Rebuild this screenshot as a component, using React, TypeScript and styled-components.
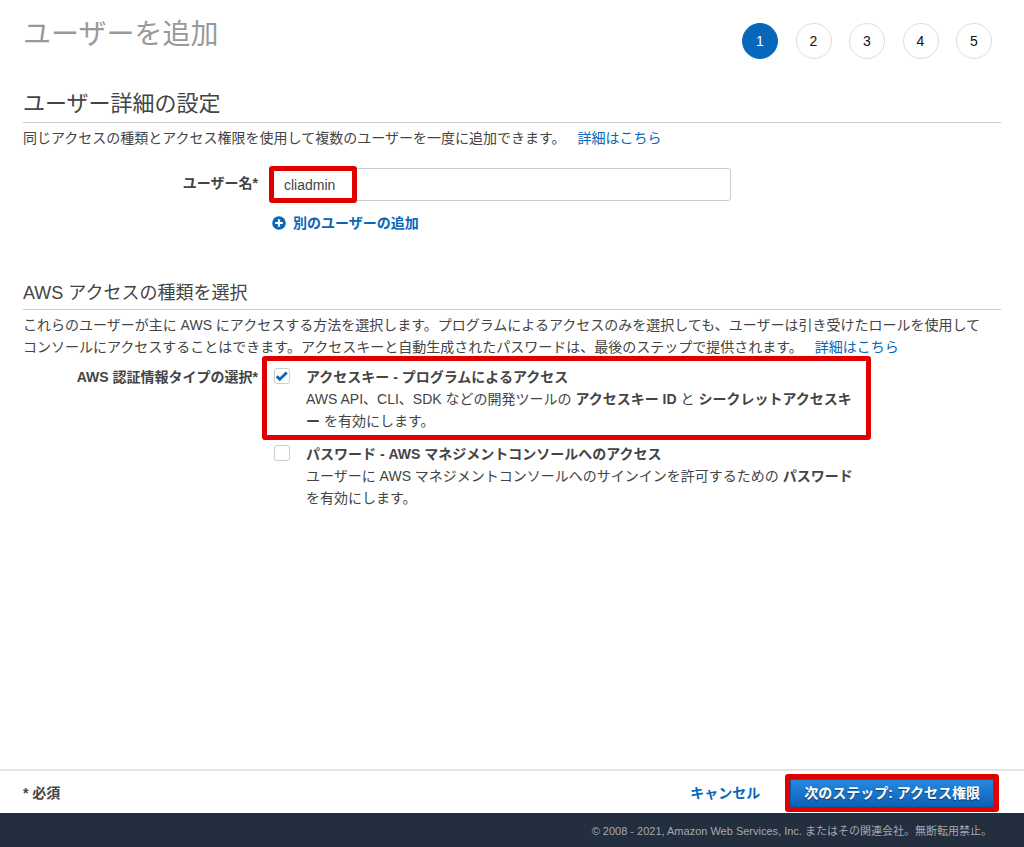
import React, { useState } from "react";
import styled, { createGlobalStyle, css } from "styled-components";

const GlobalStyle = createGlobalStyle`
  *, *::before, *::after { box-sizing: border-box; }
  body {
    margin: 0;
    background: #fff;
    color: #444;
    font-family: "Liberation Sans", "Noto Sans CJK JP", sans-serif;
    font-size: 14px;
    line-height: 22px;
  }
  h1, h2, p { margin: 0; }
`;

const Page = styled.div`
  display: flex;
  flex-direction: column;
  min-height: 100vh;
`;

const Main = styled.main`
  flex: 1;
  padding: 17px 23px 0;
`;

const Header = styled.header`
  display: flex;
  justify-content: space-between;
  align-items: flex-start;
  padding-right: 9px;
`;

const Title = styled.h1`
  color: #999;
  font-size: 28px;
  font-weight: 400;
  line-height: 36px;
`;

const Steps = styled.ol`
  display: flex;
  justify-content: space-between;
  width: 250px;
  margin: 0;
  padding: 6px 0 0;
  list-style: none;
`;

const Step = styled.li<{ $current?: boolean }>`
  display: flex;
  align-items: center;
  justify-content: center;
  width: 36px;
  height: 36px;
  border: 1px solid ${(p) => (p.$current ? "#0767ba" : "#ddd")};
  border-radius: 50%;
  background: ${(p) => (p.$current ? "#0767ba" : "#fff")};
  color: ${(p) => (p.$current ? "#fff" : "#111")};
`;

const Section = styled.section<{ $gap: number }>`
  margin-top: ${(p) => p.$gap}px;
`;

const Heading = styled.h2<{ $large?: boolean }>`
  margin-bottom: 4px;
  padding-bottom: 4px;
  border-bottom: 1px solid #ccc;
  font-size: ${(p) => (p.$large ? 22 : 18)}px;
  font-weight: 400;
  line-height: ${(p) => (p.$large ? 28 : 24)}px;
`;

const Intro = styled.p`
  padding-right: 8px;
`;

const linkStyle = css`
  color: #0767ba;
  text-decoration: none;
`;

const MoreLink = styled.a`
  ${linkStyle}
  margin-left: 8px;
`;

const FormRow = styled.div`
  display: grid;
  grid-template-columns: 235px minmax(0, 1fr);
  column-gap: 14px;
`;

const NameRow = styled(FormRow)`
  margin-top: 19px;
`;

const CredentialRow = styled(FormRow)`
  margin-top: 8px;
`;

const fieldLabel = css`
  font-weight: 700;
  text-align: right;
`;

const NameLabel = styled.label`
  ${fieldLabel}
  padding-top: 4px;
`;

const GroupLabel = styled.div`
  ${fieldLabel}
`;

const Marked = styled.div`
  position: relative;
`;

const Mark = styled.span`
  position: absolute;
  border: 5px solid #e00000;
  border-radius: 3px;
  pointer-events: none;
`;

const NameMark = styled(Mark)`
  top: -2px;
  left: -3px;
  width: 88px;
  height: 37px;
`;

const OptionMark = styled(Mark)`
  inset: -10px -12px -8px -10px;
`;

const ButtonMark = styled(Mark)`
  inset: -5px;
`;

const NameInput = styled.input`
  display: block;
  width: 100%;
  height: 33px;
  padding: 0 11px;
  border: 1px solid #ccc;
  border-radius: 3px;
  color: #444;
  font: inherit;
`;

const NameField = styled(Marked)`
  max-width: 459px;
`;

const AddButton = styled.button`
  display: flex;
  align-items: center;
  gap: 7px;
  margin-top: 11px;
  padding: 0;
  border: 0;
  background: none;
  color: #0767ba;
  font: inherit;
  font-weight: 700;
`;

const Options = styled.div`
  display: grid;
  row-gap: 11px;
  max-width: 587px;
`;

const Option = styled(Marked)`
  display: grid;
  grid-template-columns: 16px minmax(0, 1fr);
  column-gap: 16px;
  padding-left: 2px;
`;

const CheckWrap = styled.span`
  position: relative;
  display: block;
  width: 16px;
  height: 16px;
  margin-top: 2px;
`;

const Check = styled.input`
  appearance: none;
  display: block;
  width: 16px;
  height: 16px;
  margin: 0;
  border: 1px solid #ccc;
  border-radius: 3px;
  background: #fff;
`;

const CheckGlyph = styled.svg`
  position: absolute;
  inset: 0;
  pointer-events: none;
`;

const OptionTitle = styled.label`
  display: block;
  font-weight: 700;
`;

const ActionBar = styled.div`
  display: flex;
  align-items: center;
  justify-content: space-between;
  min-height: 44px;
  padding: 2px 30px 0 23px;
  border-top: 2px solid #e4e4e4;
`;

const Actions = styled.div`
  display: flex;
  align-items: center;
  gap: 30px;
`;

const CancelLink = styled.a`
  ${linkStyle}
  font-weight: 700;
`;

const NextButton = styled.button`
  display: block;
  height: 28px;
  padding: 0 13px;
  border: 1px solid #0a5cab;
  background: linear-gradient(#2589e0, #0c62b8);
  color: #fff;
  font: inherit;
  font-weight: 700;
  text-shadow: 0 1px 1px rgba(0, 0, 0, 0.5);
`;

const Footer = styled.footer`
  padding: 8px 32px 6px;
  background: #232f3e;
  color: #a3a9b0;
  font-size: 11px;
  line-height: 20px;
  text-align: right;
`;

function AddIcon() {
  return (
    <svg width="14" height="14" viewBox="0 0 14 14" aria-hidden="true">
      <circle cx="7" cy="7" r="6.8" fill="#0767ba" />
      <path d="M7 3.2v7.6M3.2 7h7.6" stroke="#fff" strokeWidth="2.2" />
    </svg>
  );
}

interface CredentialOptionProps {
  id: string;
  title: string;
  defaultChecked?: boolean;
  marked?: boolean;
  children: React.ReactNode;
}

function CredentialOption({ id, title, defaultChecked = false, marked, children }: CredentialOptionProps) {
  const [checked, setChecked] = useState(defaultChecked);
  return (
    <Option>
      <CheckWrap>
        <Check id={id} type="checkbox" checked={checked} onChange={(e) => setChecked(e.target.checked)} />
        {checked && (
          <CheckGlyph width="16" height="16" viewBox="0 0 16 16" aria-hidden="true">
            <path d="M2.8 8.2l3 3 7-6.6" fill="none" stroke="#0767ba" strokeWidth="2.8" />
          </CheckGlyph>
        )}
      </CheckWrap>
      <div>
        <OptionTitle htmlFor={id}>{title}</OptionTitle>
        <p>{children}</p>
      </div>
      {marked && <OptionMark />}
    </Option>
  );
}

export default function App() {
  return (
    <Page>
      <GlobalStyle />
      <Main>
        <Header>
          <Title>ユーザーを追加</Title>
          <Steps>
            {[1, 2, 3, 4, 5].map((n) => (
              <Step key={n} $current={n === 1}>{n}</Step>
            ))}
          </Steps>
        </Header>

        <Section $gap={31}>
          <Heading $large>ユーザー詳細の設定</Heading>
          <Intro>
            同じアクセスの種類とアクセス権限を使用して複数のユーザーを一度に追加できます。{" "}
            <MoreLink href="#users">詳細はこちら</MoreLink>
          </Intro>
          <NameRow>
            <NameLabel htmlFor="user-name">ユーザー名*</NameLabel>
            <div>
              <NameField>
                <NameInput id="user-name" type="text" defaultValue="cliadmin" />
                <NameMark />
              </NameField>
              <AddButton type="button">
                <AddIcon />
                別のユーザーの追加
              </AddButton>
            </div>
          </NameRow>
        </Section>

        <Section $gap={47}>
          <Heading>AWS アクセスの種類を選択</Heading>
          <Intro>
            これらのユーザーが主に AWS にアクセスする方法を選択します。プログラムによるアクセスのみを選択しても、ユーザーは引き受けたロールを使用してコンソールにアクセスすることはできます。アクセスキーと自動生成されたパスワードは、最後のステップで提供されます。{" "}
            <MoreLink href="#access">詳細はこちら</MoreLink>
          </Intro>
          <CredentialRow>
            <GroupLabel id="credential-type">AWS 認証情報タイプの選択*</GroupLabel>
            <Options role="group" aria-labelledby="credential-type">
              <CredentialOption id="access-key" title="アクセスキー - プログラムによるアクセス" defaultChecked marked>
                AWS API、CLI、SDK などの開発ツールの <strong>アクセスキー ID</strong> と{" "}
                <strong>シークレットアクセスキー</strong> を有効にします。
              </CredentialOption>
              <CredentialOption id="password" title="パスワード - AWS マネジメントコンソールへのアクセス">
                ユーザーに AWS マネジメントコンソールへのサインインを許可するための <strong>パスワード</strong>{" "}
                を有効にします。
              </CredentialOption>
            </Options>
          </CredentialRow>
        </Section>
      </Main>

      <ActionBar>
        <strong>* 必須</strong>
        <Actions>
          <CancelLink href="#cancel">キャンセル</CancelLink>
          <Marked>
            <NextButton type="button">次のステップ: アクセス権限</NextButton>
            <ButtonMark />
          </Marked>
        </Actions>
      </ActionBar>
      <Footer>© 2008 - 2021, Amazon Web Services, Inc. またはその関連会社。無断転用禁止。</Footer>
    </Page>
  );
}
